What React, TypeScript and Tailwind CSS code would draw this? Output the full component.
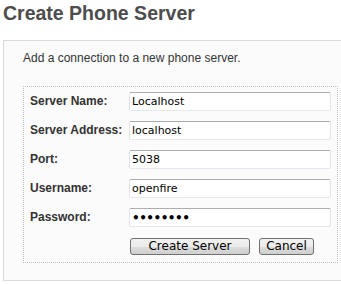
const fields = [
  { label: "Server Name:", value: "Localhost", type: "text" },
  { label: "Server Address:", value: "localhost", type: "text" },
  { label: "Port:", value: "5038", type: "text" },
  { label: "Username:", value: "openfire", type: "text" },
  { label: "Password:", value: "openfire", type: "password" },
];

const btn =
  "h-[17px] rounded-[3px] border border-[#707070] bg-[linear-gradient(#f2f2f2_0%,#ebebeb_50%,#dddddd_51%,#cfcfcf_100%)] text-[12px] leading-[15px] text-black font-['DejaVu_Sans',sans-serif]";

export default function App() {
  return (
    <div className="min-h-[284px] w-[341px] overflow-hidden bg-white pl-[3px] font-['Liberation_Sans',Arial,sans-serif]">
      <h1 className="pt-[1px] text-[19.5px] font-bold leading-[24px] text-[#4d4d4d]">
        Create Phone Server
      </h1>

      <div className="mt-[15px] w-[360px] border border-[#dcdcdc] bg-[#fbfbfb] pb-[17px] pl-[19px] pt-[9px]">
        <p className="text-[12px] leading-[16px] text-[#333]">
          Add a connection to a new phone server.
        </p>

        <div className="mt-[20px] w-[315px] border border-dotted border-[#c4c4c4] pb-[7px] pl-[6px] pr-[5px] pt-[5px]">
          <div className="flex flex-col gap-[10px]">
            {fields.map((f) => (
              <div key={f.label} className="flex items-start">
                <label className="w-[99px] shrink-0 pt-[1px] text-[12px] font-bold leading-[16px] text-[#333]">
                  {f.label}
                </label>
                <input
                  type={f.type}
                  readOnly
                  defaultValue={f.value}
                  className={
                    f.type === "password"
                      ? "h-[19px] w-[202px] rounded-[2px] border border-[#e2e3ea] border-t-[#abadb3] border-b-[#e3e9ef] bg-white px-[2px] text-[12px] font-bold tracking-[-0.5px] text-black outline-none font-['DejaVu_Sans',sans-serif]"
                      : "h-[19px] w-[202px] rounded-[2px] border border-[#e2e3ea] border-t-[#abadb3] border-b-[#e3e9ef] bg-white px-[2px] text-[11px] text-black outline-none font-['DejaVu_Sans',sans-serif]"
                  }
                />
              </div>
            ))}
          </div>
          <div className="mt-[11px] flex gap-[9px] pl-[100px]">
            <button className={`${btn} w-[120px]`}>Create Server</button>
            <button className={`${btn} w-[55px]`}>Cancel</button>
          </div>
        </div>
      </div>
    </div>
  );
}
